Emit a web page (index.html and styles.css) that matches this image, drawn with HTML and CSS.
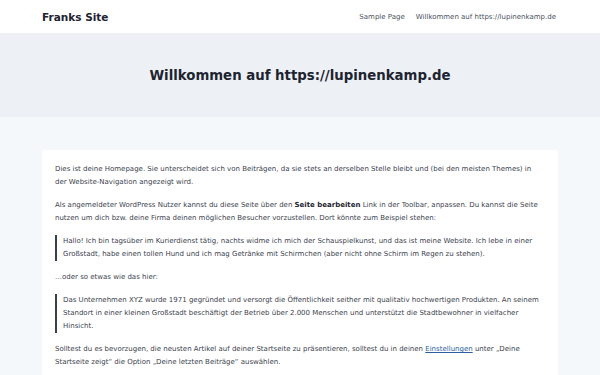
FILE: index.html
```html
<!DOCTYPE html>
<html lang="de">
<head>
<meta charset="utf-8">
<title>Franks Site</title>
<link rel="stylesheet" href="styles.css">
</head>
<body>
<header class="site-header">
  <div class="header-inner">
    <a class="site-title" href="#">Franks Site</a>
    <nav class="site-nav">
      <a href="#">Sample Page</a>
      <a href="#">Willkommen auf https://lupinenkamp.de</a>
    </nav>
  </div>
</header>
<section class="hero">
  <h1>Willkommen auf https://lupinenkamp.de</h1>
</section>
<main class="main">
  <article class="card">
    <p>Dies ist deine Homepage. Sie unterscheidet sich von Beiträgen, da sie stets an derselben Stelle bleibt und (bei den meisten Themes) in der Website-Navigation angezeigt wird.</p>
    <p>Als angemeldeter WordPress Nutzer kannst du diese Seite über den <strong>Seite bearbeiten</strong> Link in der Toolbar, anpassen. Du kannst die Seite nutzen um dich bzw. deine Firma deinen möglichen Besucher vorzustellen. Dort könnte zum Beispiel stehen:</p>
    <blockquote><p>Hallo! Ich bin tagsüber im Kurierdienst tätig, nachts widme ich mich der Schauspielkunst, und das ist meine Website. Ich lebe in einer Großstadt, habe einen tollen Hund und ich mag Getränke mit Schirmchen (aber nicht ohne Schirm im Regen zu stehen).</p></blockquote>
    <p>…oder so etwas wie das hier:</p>
    <blockquote><p>Das Unternehmen XYZ wurde 1971 gegründet und versorgt die Öffentlichkeit seither mit qualitativ hochwertigen Produkten. An seinem Standort in einer kleinen Großstadt beschäftigt der Betrieb über 2.000 Menschen und unterstützt die Stadtbewohner in vielfacher Hinsicht.</p></blockquote>
    <p>Solltest du es bevorzugen, die neusten Artikel auf deiner Startseite zu präsentieren, solltest du in deinen <a href="#">Einstellungen</a> unter „Deine Startseite zeigt“ die Option „Deine letzten Beiträge“ auswählen.</p>
  </article>
</main>
</body>
</html>
```

FILE: styles.css
```css
* { box-sizing: border-box; }
html, body { margin: 0; padding: 0; }
body {
  font-family: "DejaVu Sans", Verdana, sans-serif;
  background: #f5f8fb;
  color: #333b45;
}
a { text-decoration: none; color: inherit; }

.site-header {
  background: #ffffff;
  height: 33px;
}
.header-inner {
  display: flex;
  align-items: center;
  justify-content: space-between;
  height: 33px;
  padding: 0 44px 0 42px;
}
.site-title {
  font-weight: bold;
  font-size: 10.5px;
  color: #1d2330;
}
.site-nav {
  display: flex;
  gap: 11px;
  font-size: 7px;
  color: #4a5260;
}

.hero {
  background: #edf1f5;
  height: 84px;
  display: flex;
  align-items: center;
  justify-content: center;
}
.hero h1 {
  margin: 0;
  font-size: 13.3px;
  font-weight: bold;
  color: #1d2330;
}

.main {
  padding: 33px 42px 0;
}
.card {
  background: #ffffff;
  padding: 13px 18px 10px 13px;
  font-size: 7px;
  line-height: 13px;
  color: #3c434d;
}
.card p { margin: 0 0 10px; }
.card blockquote {
  margin: 0 0 10px;
  border-left: 2px solid #3a3f48;
  padding-left: 6px;
}
.card blockquote p { margin: 0; }
.card strong { color: #1d2330; }
.card a { color: #2b5f9e; text-decoration: underline; }
```
